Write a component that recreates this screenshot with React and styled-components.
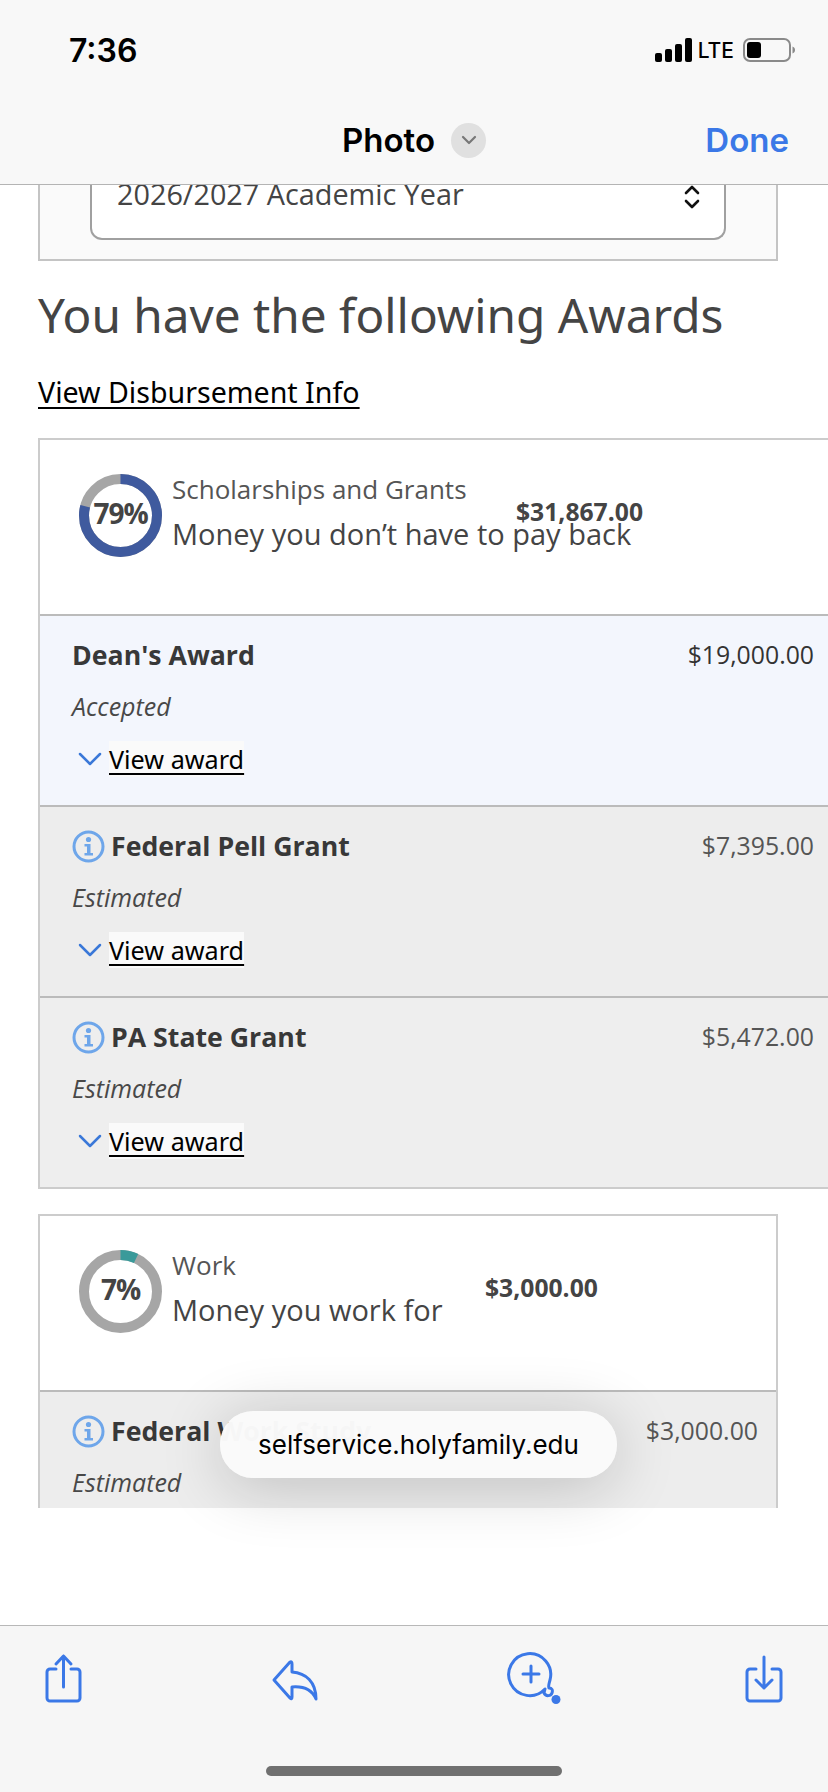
import React from "react";
import styled, { createGlobalStyle } from "styled-components";

const GlobalStyle = createGlobalStyle`
  html, body {
    margin: 0;
    padding: 0;
    background: #fff;
  }
`;

const Phone = styled.div`
  width: 828px;
  height: 1792px;
  display: flex;
  flex-direction: column;
  position: relative;
  overflow: hidden;
  background: #fff;
  font-family: "Open Sans", "Noto Sans", sans-serif;
  color: #444;
`;

const TopBar = styled.header`
  height: 185px;
  box-sizing: border-box;
  padding: 30px 39px 0 69px;
  background: #f8f8f8;
  border-bottom: 1px solid #b4b4b4;
`;

const StatusRow = styled.div`
  display: flex;
  justify-content: space-between;
  align-items: center;
  height: 40px;
`;

const Time = styled.span`
  font-family: Inter, "Liberation Sans", sans-serif;
  font-weight: 600;
  font-size: 32px;
  color: #000;
`;

const StatusIcons = styled.div`
  display: flex;
  align-items: center;
  gap: 6px;
  margin-right: -6px;
`;

const Lte = styled.span`
  font-family: Inter, "Liberation Sans", sans-serif;
  font-size: 21px;
  font-weight: 500;
  color: #000;
  margin-right: 3px;
`;

const NavRow = styled.div`
  display: grid;
  grid-template-columns: 1fr auto 1fr;
  align-items: center;
  margin-top: 50px;
  height: 40px;
`;

const TitleGroup = styled.div`
  display: flex;
  align-items: center;
  gap: 16px;
  transform: translateX(-15px);
`;

const Title = styled.span`
  font-family: Inter, "Liberation Sans", sans-serif;
  font-weight: 600;
  font-size: 33px;
  color: #000;
`;

const TitleChevron = styled.span`
  width: 35px;
  height: 35px;
  border-radius: 50%;
  background: #e0e0e0;
  display: grid;
  place-items: center;
`;

const Done = styled.span`
  justify-self: end;
  font-family: Inter, "Liberation Sans", sans-serif;
  font-weight: 600;
  font-size: 33px;
  color: #3b78e7;
`;

const Sheet = styled.main`
  height: 1323px;
  overflow: hidden;
  padding-left: 38px;
`;

const YearPanel = styled.div`
  width: 740px;
  height: 76px;
  box-sizing: border-box;
  background: #fafafa;
  border: 2px solid #c4c4c4;
  border-top: none;
  padding-left: 50px;
`;

const YearSelect = styled.div`
  width: 636px;
  height: 55px;
  box-sizing: border-box;
  display: flex;
  justify-content: space-between;
  padding: 0 24px 0 25px;
  background: #fff;
  border: 2px solid #a0a0a0;
  border-top: none;
  border-radius: 0 0 12px 12px;
  font-size: 28.8px;
  line-height: 18px;
  color: #444;
`;

const Heading = styled.h1`
  margin: 22px 0 0;
  font-family: "Noto Sans", "Open Sans", sans-serif;
  font-weight: 400;
  font-size: 47.7px;
  line-height: 64px;
  color: #444;
  white-space: nowrap;
`;

const DisbursementLink = styled.a`
  display: block;
  margin-top: 27px;
  font-family: "Noto Sans", "Open Sans", sans-serif;
  font-size: 28.6px;
  line-height: 36px;
  color: #000;
  text-decoration: underline;
  text-underline-offset: 4px;
`;

const Card = styled.section`
  width: ${(p) => p.$width}px;
  box-sizing: border-box;
  margin-top: ${(p) => p.$top}px;
  background: #fff;
  border: 2px solid #ccc;
`;

const CardHead = styled.div`
  height: 174px;
  box-sizing: border-box;
  padding: 31px 0 0 39px;
  display: grid;
  grid-template-columns: 83px ${(p) => p.$textWidth}px auto;
  column-gap: 10px;
  justify-content: start;
  align-items: start;
`;

const Donut = styled.div`
  display: grid;
  place-items: center;
  margin-top: 3px;
  & > * {
    grid-area: 1 / 1;
  }
`;

const DonutLabel = styled.span`
  font-weight: 700;
  font-size: 28px;
  letter-spacing: -1px;
  color: #444;
  margin-top: -6px;
`;

const HeadText = styled.div`
  white-space: nowrap;
`;

const GroupName = styled.div`
  font-size: 26px;
  line-height: 36px;
  color: #555;
`;

const GroupNote = styled.div`
  margin-top: 9px;
  font-size: 29px;
  line-height: 36px;
  color: #444;
`;

const GroupTotal = styled.div`
  margin-top: 23px;
  margin-left: -9px;
  font-weight: 700;
  font-size: 24.7px;
  line-height: 36px;
  color: #444;
`;

const Row = styled.div`
  box-sizing: border-box;
  height: 191px;
  padding: 21px 18px 0 32px;
  border-top: 2px solid #bbb;
  background: ${(p) => p.$bg};
`;

const RowTop = styled.div`
  display: flex;
  justify-content: space-between;
  align-items: flex-start;
`;

const AwardName = styled.div`
  display: flex;
  align-items: center;
  gap: 6px;
  font-weight: 700;
  font-size: 26.7px;
  line-height: 36px;
  color: #383838;
`;

const Amount = styled.div`
  margin-top: -1px;
  font-size: 24.8px;
  line-height: 36px;
  color: ${(p) => (p.$accepted ? "#333" : "#555")};
`;

const Status = styled.div`
  margin-top: 15px;
  font-style: italic;
  font-size: 25px;
  line-height: 36px;
  color: #484848;
`;

const ViewAward = styled.div`
  display: flex;
  align-items: center;
  gap: 7px;
  margin: 17px 0 0 6px;
`;

const ViewLink = styled.a`
  font-family: "Noto Sans", "Open Sans", sans-serif;
  font-size: 25.2px;
  line-height: 36px;
  color: #000;
  background: #fafafa;
  text-decoration: underline;
  text-underline-offset: 4px;
`;

const Toast = styled.div`
  position: absolute;
  left: 220px;
  top: 1411px;
  width: 397px;
  height: 67px;
  display: grid;
  place-items: center;
  border-radius: 33px;
  background: rgba(250, 250, 250, 0.98);
  box-shadow: 0 8px 64px rgba(0, 0, 0, 0.2);
  font-family: Inter, "Liberation Sans", sans-serif;
  font-size: 26px;
  color: #000;
`;

const BottomBar = styled.footer`
  position: absolute;
  left: 0;
  right: 0;
  bottom: 0;
  height: 167px;
  box-sizing: border-box;
  padding: 26px 45px 0;
  background: #f6f6f6;
  border-top: 1px solid #b8b8b8;
`;

const ToolRow = styled.div`
  display: flex;
  justify-content: space-between;
  align-items: flex-start;
`;

const ToolIcon = styled.svg`
  overflow: visible;
  fill: none;
  stroke: #3b78e7;
  stroke-width: 3;
  stroke-linecap: round;
  stroke-linejoin: round;
`;

const HomeBar = styled.div`
  width: 296px;
  height: 10px;
  margin: 62px auto 0;
  border-radius: 5px;
  background: #707070;
`;

// ring chart, value runs clockwise from twelve o'clock
const Ring = ({ percent, color, label }) => {
  const r = 36.5;
  const length = 2 * Math.PI * r;
  return (
    <Donut>
      <svg width="83" height="83" viewBox="0 0 83 83">
        <circle cx="41.5" cy="41.5" r={r} fill="none" stroke="#a6a6a6" strokeWidth="10" />
        <circle
          cx="41.5"
          cy="41.5"
          r={r}
          fill="none"
          stroke={color}
          strokeWidth="10"
          strokeDasharray={`${(length * percent) / 100} ${length}`}
          transform="rotate(-90 41.5 41.5)"
        />
      </svg>
      <DonutLabel>{label}</DonutLabel>
    </Donut>
  );
};

const InfoIcon = () => (
  <svg width="33" height="33" viewBox="0 0 33 33">
    <circle cx="16.5" cy="16.5" r="14.5" fill="none" stroke="#6ea6ea" strokeWidth="3" />
    <circle cx="16.5" cy="9.5" r="2.6" fill="#6ea6ea" />
    <path d="M12.5 14h6v9h2.5v2.5H12.5V23H15v-6.500h-2.500z" fill="#6ea6ea" />
  </svg>
);

const DownChevron = () => (
  <svg width="24" height="14" viewBox="0 0 24 14" fill="none" stroke="#3a78d8" strokeWidth="2.5" strokeLinecap="round" strokeLinejoin="round">
    <path d="M2 2l10 10L22 2" />
  </svg>
);

const Stepper = () => (
  <svg width="16" height="24" viewBox="0 0 16 24" fill="none" stroke="#111" strokeWidth="2.6" strokeLinecap="round" strokeLinejoin="round">
    <path d="M2 8l6-6 6 6M2 16l6 6 6-6" />
  </svg>
);

const Signal = () => (
  <svg width="37" height="24" viewBox="0 0 37 24" fill="#000">
    <rect x="0" y="15" width="7" height="9" rx="2" />
    <rect x="10" y="11" width="7" height="13" rx="2" />
    <rect x="20" y="6" width="7" height="18" rx="2" />
    <rect x="30" y="0" width="7" height="24" rx="2" />
  </svg>
);

const Battery = () => (
  <svg width="52" height="24" viewBox="0 0 52 24">
    <rect x="1" y="1" width="46" height="22" rx="6" fill="none" stroke="#8a8a8a" strokeWidth="2" />
    <rect x="4" y="4" width="14" height="16" rx="3" fill="#000" />
    <path d="M49.500 8.500c2 .8 2.500 2 2.500 3.500s-.5 2.700-2.500 3.500z" fill="#8a8a8a" />
  </svg>
);

const ShareIcon = () => (
  <ToolIcon width="37" height="52" viewBox="0 0 37 52">
    <path d="M11 17H5a3 3 0 0 0-3 3v26a3 3 0 0 0 3 3h27a3 3 0 0 0 3-3V20a3 3 0 0 0-3-3h-6" />
    <path d="M18.500 35V4M11 12l7.500-8L26 12" />
  </ToolIcon>
);

const ReplyIcon = () => (
  <ToolIcon width="45" height="52" viewBox="0 0 45 52">
    <path d="M2 28L18 10q2-1 2 2v8c14 1 24 10 24 27-4-9-12-13-24-12v10q0 3-2 1z" />
  </ToolIcon>
);

const MarkupIcon = () => (
  <ToolIcon width="47" height="52" viewBox="0 0 47 52">
    <path d="M37 37a21 21 0 1 1 5-9c-1 4-2 6-1 8 3 0 4 2 3 5-1 3-6 4-8 0z" />
    <path d="M23 14v16M15 22h16" />
    <circle cx="48" cy="47.500" r="4.500" fill="#3b78e7" stroke="none" />
  </ToolIcon>
);

const SaveIcon = () => (
  <ToolIcon width="38" height="52" viewBox="0 0 38 52">
    <path d="M11 17H5a3 3 0 0 0-3 3v26a3 3 0 0 0 3 3h28a3 3 0 0 0 3-3V20a3 3 0 0 0-3-3h-6" />
    <path d="M19 5v31M11 28l8 8 8-8" />
  </ToolIcon>
);

const AwardRow = ({ name, amount, status, bg, info, accepted }) => (
  <Row $bg={bg}>
    <RowTop>
      <AwardName>
        {info && <InfoIcon />}
        <span>{name}</span>
      </AwardName>
      <Amount $accepted={accepted}>{amount}</Amount>
    </RowTop>
    <Status>{status}</Status>
    <ViewAward>
      <DownChevron />
      <ViewLink>View award</ViewLink>
    </ViewAward>
  </Row>
);

export default function App() {
  return (
    <Phone>
      <GlobalStyle />
      <TopBar>
        <StatusRow>
          <Time>7:36</Time>
          <StatusIcons>
            <Signal />
            <Lte>LTE</Lte>
            <Battery />
          </StatusIcons>
        </StatusRow>
        <NavRow>
          <span />
          <TitleGroup>
            <Title>Photo</Title>
            <TitleChevron>
              <svg width="16" height="10" viewBox="0 0 16 10" fill="none" stroke="#777" strokeWidth="2.200" strokeLinecap="round" strokeLinejoin="round">
                <path d="M2 2l6 6 6-6" />
              </svg>
            </TitleChevron>
          </TitleGroup>
          <Done>Done</Done>
        </NavRow>
      </TopBar>

      <Sheet>
        <YearPanel>
          <YearSelect>
            <span>2026/2027 Academic Year</span>
            <Stepper />
          </YearSelect>
        </YearPanel>

        <Heading>You have the following Awards</Heading>
        <DisbursementLink>View Disbursement Info</DisbursementLink>

        <Card $width={796} $top={28}>
          <CardHead $textWidth={343}>
            <Ring percent={79} color="#3f5a9e" label="79%" />
            <HeadText>
              <GroupName>Scholarships and Grants</GroupName>
              <GroupNote>Money you don’t have to pay back</GroupNote>
            </HeadText>
            <GroupTotal>$31,867.00</GroupTotal>
          </CardHead>
          <AwardRow name="Dean's Award" amount="$19,000.00" status="Accepted" bg="#f3f6fd" accepted />
          <AwardRow name="Federal Pell Grant" amount="$7,395.00" status="Estimated" bg="#ededed" info />
          <AwardRow name="PA State Grant" amount="$5,472.00" status="Estimated" bg="#eeeeee" info />
        </Card>

        <Card $width={740} $top={25}>
          <CardHead $textWidth={312}>
            <Ring percent={7} color="#3a9a9a" label="7%" />
            <HeadText>
              <GroupName>Work</GroupName>
              <GroupNote>Money you work for</GroupNote>
            </HeadText>
            <GroupTotal>$3,000.00</GroupTotal>
          </CardHead>
          <AwardRow name="Federal Work Study" amount="$3,000.00" status="Estimated" bg="#ededed" info />
        </Card>
      </Sheet>

      <Toast>selfservice.holyfamily.edu</Toast>

      <BottomBar>
        <ToolRow>
          <ShareIcon />
          <ReplyIcon />
          <MarkupIcon />
          <SaveIcon />
        </ToolRow>
        <HomeBar />
      </BottomBar>
    </Phone>
  );
}
